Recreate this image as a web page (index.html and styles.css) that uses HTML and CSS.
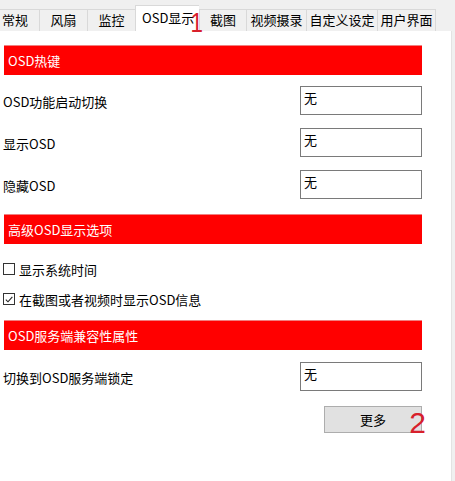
FILE: index.html
```html
<!DOCTYPE html>
<html lang="zh-CN">
<head>
<meta charset="utf-8">
<title>OSD显示</title>
<link rel="stylesheet" href="styles.css">
</head>
<body>
<div class="window">
  <div class="tabs">
    <div class="tab t1">常规</div>
    <div class="tab t2">风扇</div>
    <div class="tab t3">监控</div>
    <div class="tab t4 active">OSD显示<span class="mark mark1">1</span></div>
    <div class="tab t5">截图</div>
    <div class="tab t6">视频摄录</div>
    <div class="tab t7">自定义设定</div>
    <div class="tab t8">用户界面</div>
  </div>
  <div class="panel">
    <div class="header">OSD热键</div>
    <div class="rows">
      <div class="row"><span class="label">OSD功能启动切换</span><div class="field">无</div></div>
      <div class="row"><span class="label">显示OSD</span><div class="field">无</div></div>
      <div class="row"><span class="label">隐藏OSD</span><div class="field">无</div></div>
    </div>
    <div class="header h2">高级OSD显示选项</div>
    <div class="checks">
      <div class="check"><span class="box"></span><span>显示系统时间</span></div>
      <div class="check"><span class="box"><svg viewBox="0 0 11 11" width="11" height="11"><path d="M2 5.6 L4.4 8 L9.2 2.6" fill="none" stroke="#222" stroke-width="1.2"/></svg></span><span>在截图或者视频时显示OSD信息</span></div>
    </div>
    <div class="header h3">OSD服务端兼容性属性</div>
    <div class="row last"><span class="label">切换到OSD服务端锁定</span><div class="field">无</div></div>
    <div class="actions">
      <div class="btn">更多<span class="mark mark2">2</span></div>
    </div>
  </div>
</div>
</body>
</html>
```
FILE: styles.css
```css
html, body {
  margin: 0;
  padding: 0;
  background: #f0f0f0;
}
body {
  font-family: "Noto Sans CJK SC", "Microsoft YaHei", sans-serif;
  font-size: 13px;
  color: #000;
  width: 455px;
  height: 481px;
  overflow: hidden;
}
.window {
  display: flex;
  flex-direction: column;
  height: 481px;
}
.tabs {
  display: flex;
  align-items: flex-end;
  height: 31px;
  margin-left: -10px;
}
.tab {
  box-sizing: border-box;
  height: 22px;
  line-height: 20px;
  text-align: center;
  border: 1px solid #d9d9d9;
  border-bottom: none;
  border-right: none;
  background: #f0f0f0;
  position: relative;
  white-space: nowrap;
}
.t1 { width: 49px; }
.t2 { width: 48px; }
.t3 { width: 48px; }
.t4 { width: 64px; }
.t5 { width: 47px; }
.t6 { width: 60px; }
.t7 { width: 71px; }
.t8 { width: 59px; border-right: 1px solid #d9d9d9; }
.tab.active {
  height: 26px;
  line-height: 24px;
  background: #fff;
  border-color: #d9d9d9;
  text-align: left;
  padding-left: 6px;
  z-index: 2;
}
.mark {
  position: absolute;
  color: #d8202c;
  font-family: "Liberation Sans", sans-serif;
  line-height: 1;
  z-index: 3;
}
.mark1 {
  font-size: 28px;
  right: -6px;
  top: 3px;
  transform: scaleX(0.8);
}
.panel {
  flex: 1;
  width: 452px;
  box-sizing: border-box;
  background: #fff;
  border-right: 1px solid #e3e3e3;
  padding: 14px 29px 0 4px;
  display: flex;
  flex-direction: column;
}
.header {
  height: 30px;
  line-height: 30px;
  background: #ff0000;
  color: #fff;
  padding-left: 4px;
  border-top: 1px solid #f08080;
  box-sizing: border-box;
}
.rows {
  display: flex;
  flex-direction: column;
  gap: 13px;
  margin-top: 11px;
}
.row {
  display: flex;
  align-items: center;
  justify-content: space-between;
  height: 29px;
}
.label {
  margin-left: -1px;
  position: relative;
  top: 1px;
}
.field {
  box-sizing: border-box;
  width: 122px;
  height: 29px;
  border: 1px solid #7a7a7a;
  padding: 2px 3px;
  line-height: 17px;
  background: #fff;
}
.header.h2 { margin-top: 15px; }
.checks {
  display: flex;
  flex-direction: column;
  margin-top: 10px;
}
.check {
  display: flex;
  align-items: center;
  height: 30px;
  gap: 4px;
  margin-left: -1px;
}
.box {
  box-sizing: border-box;
  width: 12px;
  height: 12px;
  border: 1px solid #333;
  display: flex;
  align-items: center;
  justify-content: center;
  background: #fff;
}
.box svg { display: block; }
.header.h3 { margin-top: 6px; }
.row.last { margin-top: 12px; }
.actions {
  display: flex;
  justify-content: flex-end;
  margin-top: 15px;
}
.btn {
  box-sizing: border-box;
  width: 98px;
  height: 27px;
  line-height: 25px;
  background: #e1e1e1;
  border: 1px solid #adadad;
  text-align: center;
  position: relative;
}
.mark2 {
  font-size: 30px;
  right: -5px;
  top: 1px;
}
```
